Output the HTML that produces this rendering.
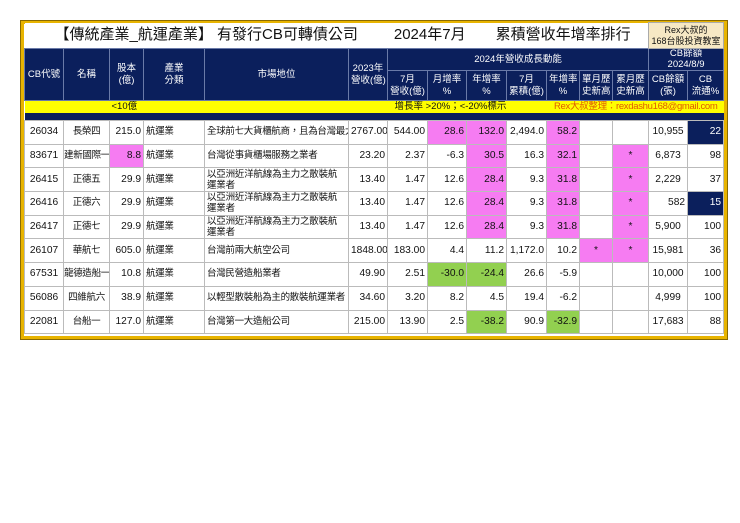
<!DOCTYPE html>
<html><head><meta charset="utf-8"><style>
body{margin:0;background:#fff;width:740px;height:523px;position:relative;font-family:"Liberation Sans","Noto Sans CJK TC",sans-serif;}
#fr{position:absolute;left:21px;top:21px;width:700px;height:312px;border:3px solid #e8b400;outline:1px solid #8a6a00;background:#fff;}
table{position:absolute;left:24px;top:22px;border-collapse:collapse;table-layout:fixed;width:699px;}
td{border:1px solid #bbb;padding:0 2px;font-size:10.2px;color:#111;white-space:nowrap;overflow:hidden;vertical-align:middle;line-height:12px;}
.h td{background:#0b1f5c;color:#fff;text-align:center;border-color:#6a7aa8;font-size:9.5px;line-height:11.5px;}
.d td{height:22.7px;}
.c{text-align:center}.r{text-align:right}.l{text-align:left}
.k{font-size:9.5px!important;letter-spacing:-0.3px}
.m{background:#f67cf2!important}.g{background:#92d050!important}.n{background:#0b1f5c!important;color:#fff!important}
.w{white-space:normal;line-height:11px;font-size:9.5px;letter-spacing:-0.2px}
</style></head><body>
<div id="fr"></div>
<table>
<colgroup><col style="width:39px"><col style="width:46px"><col style="width:34px"><col style="width:61px"><col style="width:144px"><col style="width:39px"><col style="width:40px"><col style="width:39px"><col style="width:40px"><col style="width:40px"><col style="width:33px"><col style="width:33px"><col style="width:36px"><col style="width:39px"><col style="width:36px"></colgroup>
<tr style="height:26px"><td colspan="13" style="border:none;font-size:15px;padding-left:30px;background:#fff">【傳統產業_航運產業】 有發行CB可轉債公司<span style="display:inline-block;width:36px"></span>2024年7月<span style="display:inline-block;width:30px"></span>累積營收年增率排行</td><td colspan="2" style="background:#f6e8c4;text-align:center;font-size:9px;line-height:11px;border:1px solid #aaa">Rex大叔的<br>168台股投資教室</td></tr>
<tr class="h" style="height:22px"><td rowspan="2">CB代號</td><td rowspan="2">名稱</td><td rowspan="2">股本<br>(億)</td><td rowspan="2">產業<br>分類</td><td rowspan="2">市場地位</td><td rowspan="2">2023年<br>營收(億)</td><td colspan="7">2024年營收成長動能</td><td colspan="2" style="line-height:10.5px">CB餘額<br>2024/8/9</td></tr>
<tr class="h" style="height:30px"><td>7月<br>營收(億)</td><td>月增率<br>%</td><td>年增率<br>%</td><td>7月<br>累積(億)</td><td>年增率<br>%</td><td>單月歷<br>史新高</td><td>累月歷<br>史新高</td><td>CB餘額<br>(張)</td><td>CB<br>流通%</td></tr>
<tr style="height:12px;background:#ffff00"><td colspan="2" style="border:none"></td><td colspan="2" style="border:none;font-size:9.5px;line-height:10px">&lt;10億</td><td style="border:none"></td><td colspan="5" style="border:none;font-size:9.5px;line-height:10px;padding-left:46px">增長率 &gt;20%；&lt;-20%標示</td><td colspan="5" style="border:none;color:#e05a00;font-size:9.5px;line-height:10px;text-align:right;letter-spacing:-0.3px;padding-right:6px">Rex大叔整理：rexdashu168@gmail.com</td></tr>
<tr style="height:8px;background:#0b1f5c"><td colspan="15" style="border:none"></td></tr>
<tr class="d"><td class="c">26034</td><td class="c k">長榮四</td><td class="r">215.0</td><td class="l k">航運業</td><td class="l k">全球前七大貨櫃航商，且為台灣最大</td><td class="r">2767.00</td><td class="r">544.00</td><td class="r m">28.6</td><td class="r m">132.0</td><td class="r">2,494.0</td><td class="r m">58.2</td><td></td><td></td><td class="c">10,955</td><td class="r n">22</td></tr>
<tr class="d"><td class="c">83671</td><td class="c k" style="padding:0">建新國際一</td><td class="r m">8.8</td><td class="l k">航運業</td><td class="l k">台灣從事貨櫃場服務之業者</td><td class="r">23.20</td><td class="r">2.37</td><td class="r">-6.3</td><td class="r m">30.5</td><td class="r">16.3</td><td class="r m">32.1</td><td></td><td class="c m">*</td><td class="c">6,873</td><td class="r">98</td></tr>
<tr class="d"><td class="c">26415</td><td class="c k">正德五</td><td class="r">29.9</td><td class="l k">航運業</td><td class="l w">以亞洲近洋航線為主力之散裝航運業者</td><td class="r">13.40</td><td class="r">1.47</td><td class="r">12.6</td><td class="r m">28.4</td><td class="r">9.3</td><td class="r m">31.8</td><td></td><td class="c m">*</td><td class="c">2,229</td><td class="r">37</td></tr>
<tr class="d"><td class="c">26416</td><td class="c k">正德六</td><td class="r">29.9</td><td class="l k">航運業</td><td class="l w">以亞洲近洋航線為主力之散裝航運業者</td><td class="r">13.40</td><td class="r">1.47</td><td class="r">12.6</td><td class="r m">28.4</td><td class="r">9.3</td><td class="r m">31.8</td><td></td><td class="c m">*</td><td class="r">582</td><td class="r n">15</td></tr>
<tr class="d"><td class="c">26417</td><td class="c k">正德七</td><td class="r">29.9</td><td class="l k">航運業</td><td class="l w">以亞洲近洋航線為主力之散裝航運業者</td><td class="r">13.40</td><td class="r">1.47</td><td class="r">12.6</td><td class="r m">28.4</td><td class="r">9.3</td><td class="r m">31.8</td><td></td><td class="c m">*</td><td class="c">5,900</td><td class="r">100</td></tr>
<tr class="d"><td class="c">26107</td><td class="c k">華航七</td><td class="r">605.0</td><td class="l k">航運業</td><td class="l k">台灣前兩大航空公司</td><td class="r">1848.00</td><td class="r">183.00</td><td class="r">4.4</td><td class="r">11.2</td><td class="r">1,172.0</td><td class="r">10.2</td><td class="c m">*</td><td class="c m">*</td><td class="c">15,981</td><td class="r">36</td></tr>
<tr class="d"><td class="c">67531</td><td class="c k" style="padding:0">龍德造船一</td><td class="r">10.8</td><td class="l k">航運業</td><td class="l k">台灣民營造船業者</td><td class="r">49.90</td><td class="r">2.51</td><td class="r g">-30.0</td><td class="r g">-24.4</td><td class="r">26.6</td><td class="r">-5.9</td><td></td><td></td><td class="c">10,000</td><td class="r">100</td></tr>
<tr class="d"><td class="c">56086</td><td class="c k">四維航六</td><td class="r">38.9</td><td class="l k">航運業</td><td class="l k">以輕型散裝船為主的散裝航運業者</td><td class="r">34.60</td><td class="r">3.20</td><td class="r">8.2</td><td class="r">4.5</td><td class="r">19.4</td><td class="r">-6.2</td><td></td><td></td><td class="c">4,999</td><td class="r">100</td></tr>
<tr class="d"><td class="c">22081</td><td class="c k">台船一</td><td class="r">127.0</td><td class="l k">航運業</td><td class="l k">台灣第一大造船公司</td><td class="r">215.00</td><td class="r">13.90</td><td class="r">2.5</td><td class="r g">-38.2</td><td class="r">90.9</td><td class="r g">-32.9</td><td></td><td></td><td class="c">17,683</td><td class="r">88</td></tr>
</table>
</body></html>
